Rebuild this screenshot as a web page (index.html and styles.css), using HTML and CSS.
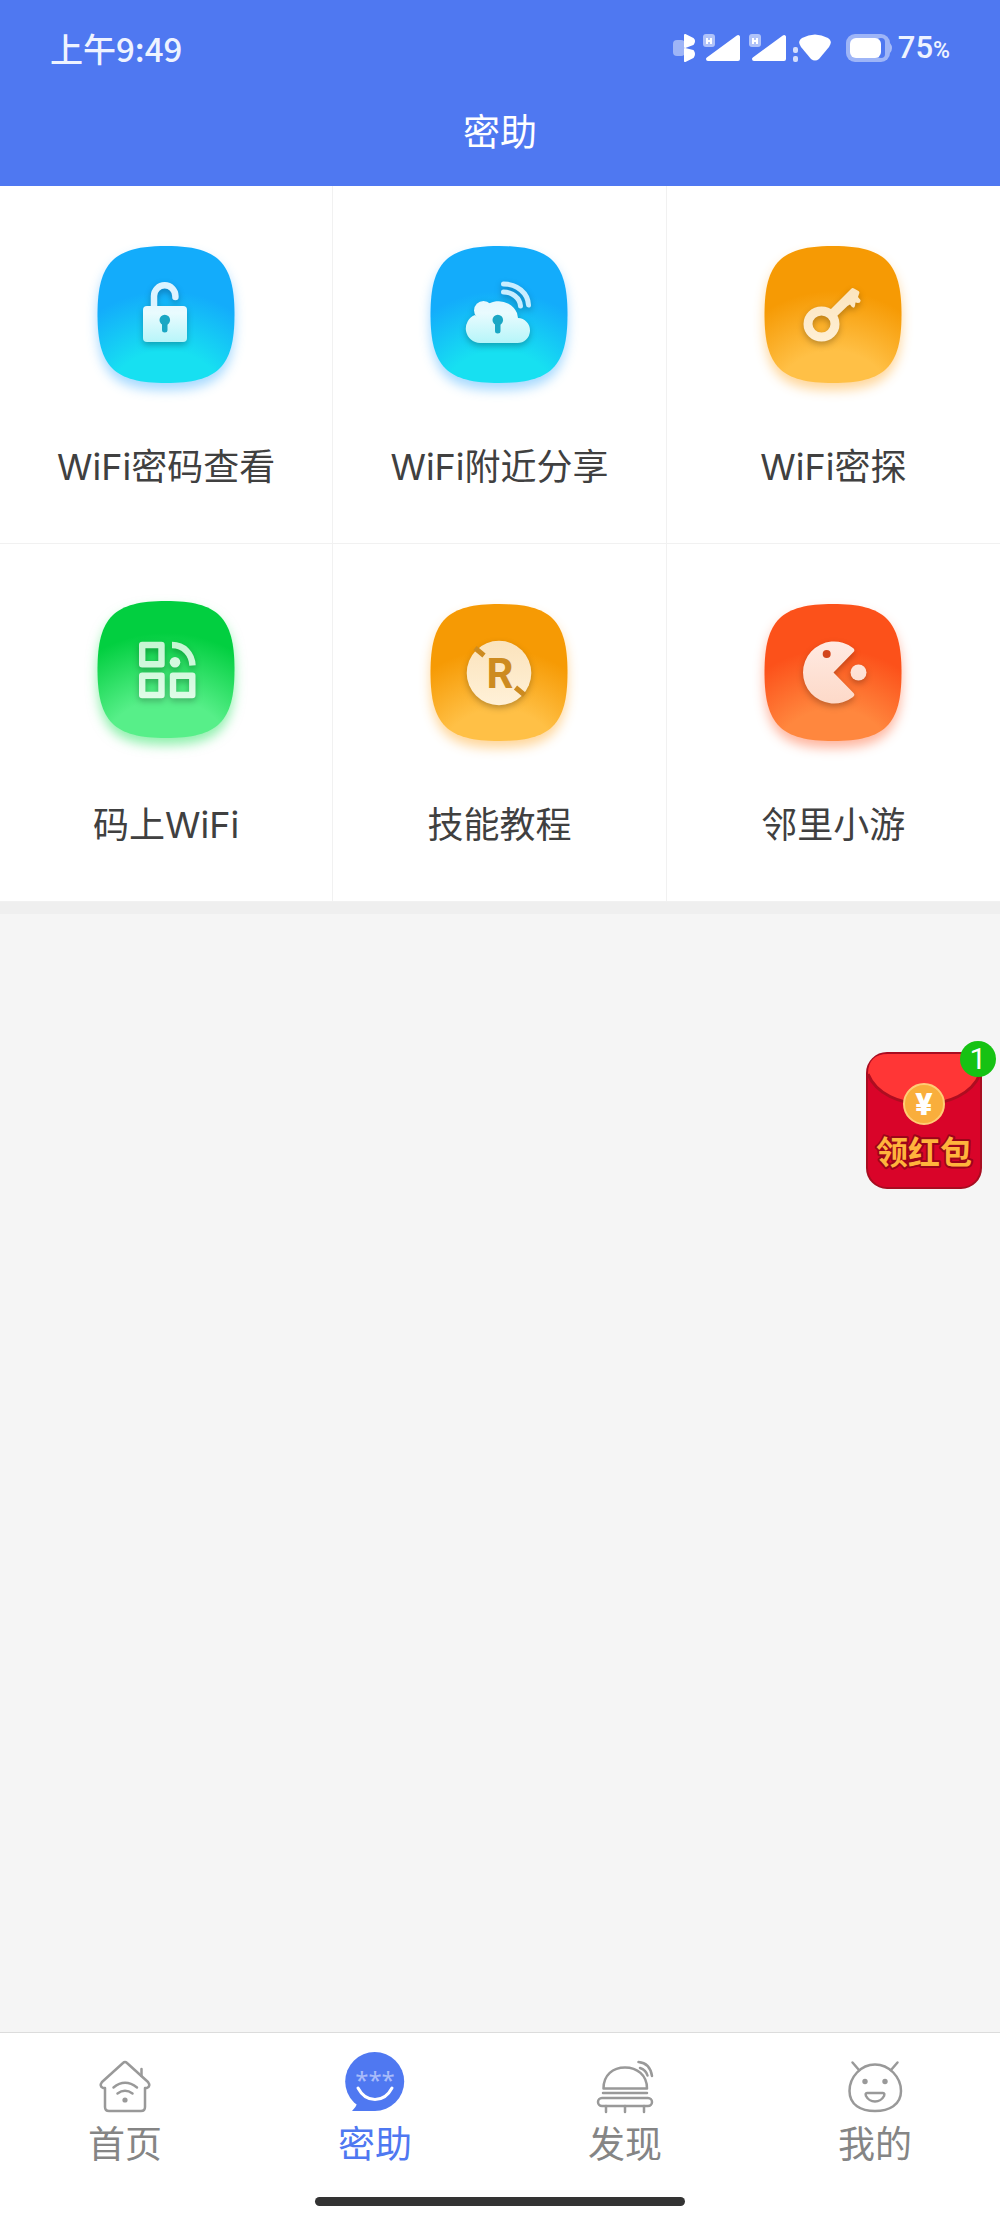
FILE: index.html
```html
<!DOCTYPE html>
<html lang="zh-CN">
<head>
    <meta charset="UTF-8">
    <meta name="viewport" content="width=device-width, initial-scale=1.0">
    <title>密助</title>
    <link rel="stylesheet" href="styles.css">
</head>
<body>
    <header class="header">
        <div class="status-bar">
            <span class="time">上午9:49</span>
            <div class="status-right">
                <svg class="status-icons" width="222" height="36" viewBox="0 0 222 36">
                    <!-- bluetooth -->
                    <rect x="1" y="10" width="12" height="16" rx="4" fill="#fff" opacity=".45"/>
                    <path d="M13 5L21 9Q23 11 21 14L13 17Z" fill="#fff" stroke="#fff" stroke-width="2" stroke-linejoin="round"/>
                    <path d="M13 19L21 21Q23 24 21 27L13 31Z" fill="#fff" stroke="#fff" stroke-width="2" stroke-linejoin="round"/>
                    <!-- signal x2 -->
                    <g id="signal">
                        <rect x="31" y="4" width="12" height="13" rx="3" fill="#fff" opacity=".55"/>
                        <path d="M35 8V14M39 8V14M35 11H39" stroke="#fff" stroke-width="2"/>
                        <path d="M36 29L66 7V29Z" fill="#fff" stroke="#fff" stroke-width="4" stroke-linejoin="round"/>
                    </g>
                    <use href="#signal" x="46"/>
                    <!-- wifi -->
                    <rect x="121" y="17" width="5" height="6" rx="2" fill="#fff" opacity=".75"/>
                    <rect x="121" y="26" width="5" height="6" rx="2" fill="#fff" opacity=".75"/>
                    <path d="M130 8Q143 1 156 8Q161 11 157 17L147 29Q143 32 139 29L129 17Q125 11 130 8Z" fill="#fff"/>
                    <!-- battery -->
                    <rect x="174" y="4" width="44" height="28" rx="9" fill="#fff" opacity=".45"/>
                    <rect x="205" y="8" width="8" height="20" rx="4" fill="#4f78f1"/>
                    <rect x="178" y="8" width="31" height="20" rx="6" fill="#fff"/>
                    <path d="M218 13Q222 18 218 23Z" fill="#fff" opacity=".5"/>
                </svg>
                <span class="battery-text">75<small>%</small></span>
            </div>
        </div>
        <h1 class="title">密助</h1>
    </header>

    <main class="content">
        <nav class="grid">
            <a class="tile" href="#password">
                <svg class="tile-icon tile-blue" viewBox="0 0 180 180">
                    <defs>
                        <radialGradient id="blue" gradientUnits="userSpaceOnUse" cx="90" cy="190" r="125">
                            <stop offset=".52" stop-color="#17e0f1"/>
                            <stop offset="1" stop-color="#13acfb"/>
                        </radialGradient>
                        <linearGradient id="blueGlyph" gradientUnits="userSpaceOnUse" x1="0" y1="56" x2="0" y2="118">
                            <stop offset="0" stop-color="#dff3ff"/>
                            <stop offset=".5" stop-color="#e9fbfe"/>
                            <stop offset="1" stop-color="#b4f5f9"/>
                        </linearGradient>
                        <path id="squircle" d="M90 20C142 20 158.500 36.500 158.500 88.500C158.500 140.500 142 157 90 157C38 157 21.500 140.500 21.500 88.500C21.500 36.500 38 20 90 20Z"/>
                    </defs>
                    <use class="plate" href="#squircle" fill="url(#blue)"/>
                    <g class="glyph">
                        <path d="M78 83V70A10.700 10.700 0 0 1 99.400 70V71" fill="none" stroke="#dcf3ff" stroke-width="6.500" stroke-linecap="round"/>
                        <rect x="67" y="80" width="44" height="36" rx="4" fill="url(#blueGlyph)"/>
                    </g>
                    <path d="M86 97H91.500V104Q91.500 106.500 88.800 106.500Q86 106.500 86 104Z" fill="#1aa7c4"/>
                    <circle cx="88.800" cy="94" r="5.300" fill="#1aa7c4"/>
                </svg>
                <span class="tile-label">WiFi密码查看</span>
            </a>

            <a class="tile" href="#nearby">
                <svg class="tile-icon tile-blue" viewBox="0 0 180 180">
                    <use class="plate" href="#squircle" fill="url(#blue)"/>
                    <g class="glyph">
                        <g fill="none" stroke="#c9edff" stroke-width="5" stroke-linecap="round">
                            <path d="M94.500 58C108 58 119 67 119.500 79"/>
                            <path d="M94.500 66C103 66 111 72 111.500 80"/>
                        </g>
                        <g fill="url(#blueGlyph)">
                            <circle cx="74.500" cy="84.500" r="9.500"/>
                            <path d="M71 117A14.500 14.500 0 0 1 66 89L70 92A20 20 0 0 1 108 87L109 92A12.500 12.500 0 0 1 108 117Z"/>
                        </g>
                    </g>
                    <path d="M86 97H91.500V105Q91.500 107.500 88.800 107.500Q86 107.500 86 105Z" fill="#1aa7c4"/>
                    <circle cx="88.800" cy="94" r="5.300" fill="#1aa7c4"/>
                </svg>
                <span class="tile-label">WiFi附近分享</span>
            </a>

            <a class="tile" href="#explore">
                <svg class="tile-icon tile-orange" viewBox="0 0 180 180">
                    <defs>
                        <radialGradient id="orange" gradientUnits="userSpaceOnUse" cx="90" cy="190" r="125">
                            <stop offset=".52" stop-color="#ffc046"/>
                            <stop offset="1" stop-color="#f69a04"/>
                        </radialGradient>
                        <linearGradient id="orangeGlyph" gradientUnits="userSpaceOnUse" x1="0" y1="58" x2="0" y2="122">
                            <stop offset="0" stop-color="#fbe3bc"/>
                            <stop offset="1" stop-color="#fff1d8"/>
                        </linearGradient>
                    </defs>
                    <use class="plate" href="#squircle" fill="url(#orange)"/>
                    <g class="glyph">
                        <ellipse cx="78.500" cy="98" rx="13.500" ry="13" fill="none" stroke="url(#orangeGlyph)" stroke-width="9"/>
                        <path d="M87 84L108 63Q109.500 61.500 111 62.500L115.500 65Q117 66 116 68L115 71L117.500 74Q118 77 115 77L112.500 76.500L112 80Q111 83 108.500 80.500L107 78.500L104.500 80L93 91Z" fill="url(#orangeGlyph)"/>
                    </g>
                </svg>
                <span class="tile-label">WiFi密探</span>
            </a>

            <a class="tile" href="#qrcode">
                <svg class="tile-icon tile-green" viewBox="0 3 180 180">
                    <defs>
                        <radialGradient id="green" gradientUnits="userSpaceOnUse" cx="90" cy="190" r="138">
                            <stop offset=".52" stop-color="#57ef89"/>
                            <stop offset="1" stop-color="#02cf40"/>
                        </radialGradient>
                        <linearGradient id="greenGlyph" gradientUnits="userSpaceOnUse" x1="0" y1="60" x2="0" y2="118">
                            <stop offset="0" stop-color="#c5f5d2"/>
                            <stop offset="1" stop-color="#e0fce8"/>
                        </linearGradient>
                    </defs>
                    <use class="plate" href="#squircle" fill="url(#green)"/>
                    <g class="glyph" fill="none" stroke="url(#greenGlyph)" stroke-width="6.400" stroke-linejoin="round">
                        <rect x="66.200" y="64" width="19.300" height="19.300"/>
                        <rect x="66.200" y="94.700" width="19.300" height="19.300"/>
                        <rect x="97" y="94.700" width="19.300" height="19.300"/>
                        <path d="M96 64C108 64 116 73 116.500 84.500"/>
                        <circle cx="99" cy="81.300" r="5.300" fill="#d5f8df" stroke="none"/>
                    </g>
                </svg>
                <span class="tile-label">码上WiFi</span>
            </a>

            <a class="tile" href="#tutorial">
                <svg class="tile-icon tile-orange" viewBox="0 0 180 180">
                    <use class="plate" href="#squircle" fill="url(#orange)"/>
                    <g class="glyph">
                        <circle cx="90" cy="89" r="32.300" fill="url(#orangeGlyph)"/>
                    </g>
                    <path d="M66 64L75 71.500M106.500 103.500L115.500 111" stroke="#cd8b20" stroke-width="5"/>
                    <text class="letter" x="91" y="104" text-anchor="middle">R</text>
                </svg>
                <span class="tile-label">技能教程</span>
            </a>

            <a class="tile" href="#games">
                <svg class="tile-icon tile-red" viewBox="0 0 180 180">
                    <defs>
                        <radialGradient id="red" gradientUnits="userSpaceOnUse" cx="90" cy="190" r="125">
                            <stop offset=".52" stop-color="#ff873e"/>
                            <stop offset="1" stop-color="#fc511a"/>
                        </radialGradient>
                        <linearGradient id="redGlyph" gradientUnits="userSpaceOnUse" x1="0" y1="58" x2="0" y2="120">
                            <stop offset="0" stop-color="#ffeae2"/>
                            <stop offset="1" stop-color="#fdd9c8"/>
                        </linearGradient>
                    </defs>
                    <use class="plate" href="#squircle" fill="url(#red)"/>
                    <g class="glyph" fill="url(#redGlyph)">
                        <path d="M90.500 88.500L110.500 68Q112.500 66 110 64A31 31 0 1 0 110 113Q112.500 111 110.500 109Z"/>
                        <circle cx="115.500" cy="88.500" r="8"/>
                    </g>
                    <circle cx="83.700" cy="70" r="4" fill="#d2451c"/>
                </svg>
                <span class="tile-label">邻里小游</span>
            </a>
        </nav>
    </main>

    <button class="packet" type="button" aria-label="领红包">
        <svg width="116" height="137" viewBox="0 0 116 137">
            <rect x="1" y="1" width="114" height="135" rx="20" fill="#d90429" stroke="#a80c20" stroke-width="2"/>
            <path d="M2 22Q2 2 22 2H94Q114 2 114 22C104 42 82 52 58 52C34 52 10 42 2 22Z" fill="#ff3636"/>
            <path d="M2 22C10 42 34 52 58 52C82 52 106 42 114 22" fill="none" stroke="#ae0d20" stroke-width="3"/>
            <circle cx="58" cy="52" r="20" fill="#f9ae3c" stroke="#ffcd75" stroke-width="2"/>
            <text class="yen" x="58" y="63" text-anchor="middle">¥</text>
            <text class="packet-text" x="58" y="112" text-anchor="middle">领红包</text>
        </svg>
        <span class="badge">1</span>
    </button>

    <footer class="footer">
        <nav class="tabs">
            <a class="tab" href="#home">
                <svg class="tab-icon" viewBox="0 0 64 64">
                    <path d="M12 38V57Q12 61 16 61H48Q52 61 52 57V38H54Q58 36 55 32L34 13Q32 11 30 13L9 32Q6 36 10 38Z"/>
                    <path d="M48.500 19V26M20.500 37.500Q32 28 44 37.500M24.500 43.500Q32 38 39.500 43.500"/>
                    <circle class="solid" cx="32" cy="50" r="2.600"/>
                </svg>
                <span>首页</span>
            </a>
            <a class="tab active" href="#help">
                <svg class="tab-icon" viewBox="0 0 64 64">
                    <circle class="bubble" cx="31.700" cy="31.500" r="29.500"/>
                    <path class="bubble" d="M32 61H9Q13 57 14 54L20 45L40 50Z"/>
                    <text class="stars" x="32" y="39" text-anchor="middle">***</text>
                    <path class="smile" d="M15 38Q21 49.500 32 49.500Q43 49.500 49 38"/>
                </svg>
                <span>密助</span>
            </a>
            <a class="tab" href="#discover">
                <svg class="tab-icon" viewBox="0 0 64 64">
                    <path d="M10.500 38.500C10.500 25 20 17.500 32 17.500C44 17.500 54 25 54 38.500ZM10 43H54"/>
                    <rect x="5" y="48" width="54" height="8" rx="4"/>
                    <path d="M13 56V62M32 56V62M51 56V62M45.500 12Q57 13 59 26M47 18Q53 20 54.500 25.500"/>
                </svg>
                <span>发现</span>
            </a>
            <a class="tab" href="#mine">
                <svg class="tab-icon" viewBox="0 0 64 64">
                    <path d="M32 14.500C46 14.500 58 27 58 41C58 55 46 61 32 61C18 61 6.500 55 6.500 41C6.500 27 18 14.500 32 14.500Z"/>
                    <path d="M9.500 12.500L16 20M54.500 12.500L48 20M24 43H40Q42 43 41 46Q38 51.500 32 51.500Q26 51.500 23 46Q22 43 24 43Z"/>
                    <circle class="solid" cx="22" cy="31.500" r="2.700"/>
                    <circle class="solid" cx="42" cy="31.500" r="2.700"/>
                </svg>
                <span>我的</span>
            </a>
        </nav>
        <div class="home-indicator"></div>
    </footer>
</body>
</html>
```
FILE: styles.css
```css
* {
    margin: 0;
    padding: 0;
    box-sizing: border-box;
}

body {
    position: relative;
    min-height: 100vh;
    display: flex;
    flex-direction: column;
    background: #f5f5f5;
    font-family: 'Noto Sans CJK SC', 'Noto Sans', sans-serif;
    color: #404040;
}

a {
    color: inherit;
    text-decoration: none;
}

/* header */
.header {
    background: #4f78f1;
    color: #fff;
}

.status-bar {
    display: flex;
    justify-content: space-between;
    align-items: center;
    padding: 22px 50px 0;
    line-height: 52px;
}

.time {
    font-size: 33px;
    font-weight: 500;
    color: #eef3ff;
}

.status-right {
    display: flex;
    align-items: center;
    gap: 4px;
}

.battery-text {
    font-family: Roboto, sans-serif;
    font-size: 31px;
    font-weight: 500;
    color: #eef3ff;
}

.battery-text small {
    font-size: 23px;
    line-height: 1;
}

.title {
    font-size: 37px;
    font-weight: 400;
    line-height: 112px;
    text-align: center;
}

/* feature grid */
.content {
    flex: 1;
}

.grid {
    display: grid;
    grid-template-columns: repeat(3, 1fr);
    background: #fff;
    border-bottom: 12px solid #efefef;
}

.tile {
    display: flex;
    flex-direction: column;
    align-items: center;
    padding: 40px 0 50px;
    border-right: 1px solid #f1f1f1;
    border-bottom: 1px solid #f1f1f1;
}

.tile:nth-child(3n) {
    border-right: none;
}

.tile-icon {
    width: 180px;
    height: 180px;
    margin-bottom: 35px;
}

.tile-label {
    font-family: Inter, 'Noto Sans CJK SC', sans-serif;
    font-size: 36px;
    line-height: 52px;
}

.tile-blue .plate {
    filter: drop-shadow(0 7px 6px rgba(30, 160, 255, 0.4));
}

.tile-orange .plate {
    filter: drop-shadow(0 7px 6px rgba(255, 165, 30, 0.45));
}

.tile-green .plate {
    filter: drop-shadow(0 7px 6px rgba(30, 225, 90, 0.5));
}

.tile-red .plate {
    filter: drop-shadow(0 7px 6px rgba(255, 90, 40, 0.45));
}

.glyph {
    filter: drop-shadow(0 3px 3px rgba(0, 0, 0, 0.25));
}

.letter {
    font-family: Roboto, sans-serif;
    font-size: 42px;
    font-weight: 700;
    fill: #cd8b20;
}

/* red packet */
.packet {
    position: absolute;
    top: 1052px;
    right: 18px;
    background: none;
    border: none;
    cursor: pointer;
}

.packet svg {
    display: block;
}

.yen {
    font-family: Roboto, sans-serif;
    font-size: 32px;
    font-weight: 900;
    fill: #fff;
}

.packet-text {
    font-family: 'Noto Sans CJK SC', sans-serif;
    font-size: 32px;
    font-weight: 700;
    fill: #ffb43c;
    stroke: #9c0519;
    stroke-width: 4px;
    stroke-linejoin: round;
    paint-order: stroke;
}

.badge {
    position: absolute;
    top: -11px;
    right: -14px;
    width: 36px;
    height: 36px;
    border-radius: 50%;
    background: #16c213;
    color: #fff;
    font-family: Roboto, sans-serif;
    font-size: 30px;
    line-height: 36px;
    text-align: center;
}

/* bottom tabs */
.footer {
    background: #fff;
    border-top: 1px solid #dcdcdc;
    padding: 17px 0 16px;
}

.tabs {
    display: grid;
    grid-template-columns: repeat(4, 1fr);
}

.tab {
    display: flex;
    flex-direction: column;
    align-items: center;
    gap: 4px;
    font-size: 37px;
    line-height: 48px;
    color: #858585;
}

.tab.active {
    color: #4f78f1;
}

.tab-icon {
    width: 64px;
    height: 64px;
    fill: none;
    stroke: #999;
    stroke-width: 2.5;
    stroke-linecap: round;
    stroke-linejoin: round;
}

.tab-icon .solid {
    fill: #999;
    stroke: none;
}

.tab-icon .bubble {
    fill: #4f78f1;
    stroke: none;
}

.tab-icon .stars {
    font-family: 'Noto Sans', sans-serif;
    font-size: 24px;
    fill: #a9bcfa;
    stroke: none;
}

.tab-icon .smile {
    stroke: #fff;
    stroke-width: 3;
}

.home-indicator {
    width: 37%;
    height: 9px;
    margin: 31px auto 0;
    border-radius: 5px;
    background: #333;
}
```
